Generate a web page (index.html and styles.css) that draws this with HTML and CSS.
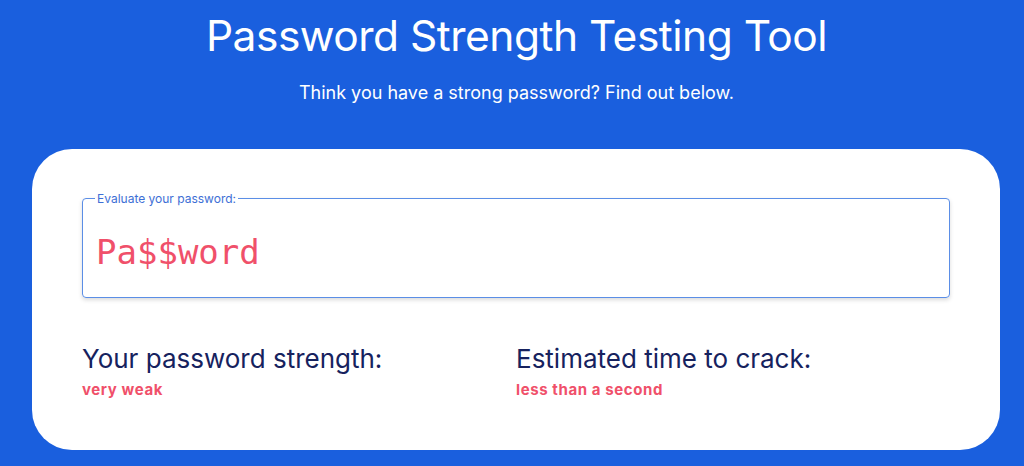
FILE: index.html
```html
<!DOCTYPE html>
<html lang="en">
<head>
  <meta charset="UTF-8">
  <meta name="viewport" content="width=device-width, initial-scale=1.0">
  <title>Password Strength Testing Tool</title>
  <link rel="stylesheet" href="styles.css">
</head>
<body>
  <header class="hero">
    <h1>Password Strength Testing Tool</h1>
    <p class="subtitle">Think you have a strong password? Find out below.</p>
  </header>

  <!-- Tester card -->
  <div class="card">
    <fieldset class="pw-field">
      <legend>Evaluate your password:</legend>
      <input type="text" id="password" value="Pa$$word" spellcheck="false">
    </fieldset>

    <div class="results">
      <div class="result">
        <h2>Your password strength:</h2>
        <p class="verdict">very weak</p>
      </div>
      <div class="result">
        <h2>Estimated time to crack:</h2>
        <p class="verdict">less than a second</p>
      </div>
    </div>
  </div>
</body>
</html>
```

FILE: styles.css
```css
body {
  margin: 0;
  background-color: #1a5fde;
  font-family: Inter, "Noto Sans", sans-serif;
}

.hero {
  text-align: center;
  color: #ffffff;
  padding: 12px 0 0 9px;
}

.hero h1 {
  margin: 0;
  font-size: 42.5px;
  font-weight: 400;
  letter-spacing: -0.5px;
  line-height: 48px;
}

.subtitle {
  margin: 21px 0 0;
  font-size: 18px;
  line-height: 24px;
}

.card {
  width: 868px;
  margin: 44px 0 0 32px;
  padding: 42px 50px 51px;
  background: #ffffff;
  border-radius: 40px;
}

.pw-field {
  margin: 0;
  padding: 0 13px;
  border: 1px solid #5b8ee6;
  border-radius: 4px;
  box-shadow: 0 2px 4px rgba(0, 0, 0, 0.15);
}

.pw-field legend {
  padding: 0 2px;
  margin-left: -1px;
  font-size: 12px;
  color: #3d6fd6;
}

.pw-field input {
  width: 100%;
  box-sizing: border-box;
  height: 91px;
  padding: 0;
  border: none;
  outline: none;
  background: transparent;
  font-family: "DejaVu Sans Mono", monospace;
  font-size: 34px;
  color: #f0506a;
}

.results {
  display: grid;
  grid-template-columns: 1fr 1fr;
  margin-top: 44px;
}

.result h2 {
  margin: 0;
  font-size: 26px;
  font-weight: 400;
  color: #16225e;
  line-height: 34px;
}

.verdict {
  margin: 4px 0 0;
  font-size: 15px;
  font-weight: 700;
  letter-spacing: 0.6px;
  color: #f0506a;
}
```
